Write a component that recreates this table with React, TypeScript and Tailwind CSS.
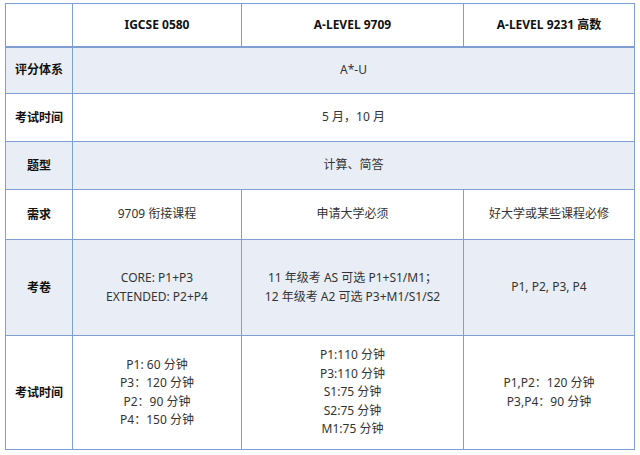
export default function App() {
  const font = { fontFamily: '"Noto Sans", "Noto Sans CJK SC", sans-serif' };
  const b = "border border-[#7f9fd2]";
  const td = `${b} text-center align-middle text-[12px] text-[#333] leading-[18.5px]`;
  const th = `${b} text-center align-middle text-[12px] font-bold text-[#111]`;
  const shade = "bg-[#e9eef6]";
  return (
    <div className="w-[640px] h-[455px] bg-white pt-[3px] pl-[5px]" style={font}>
      <table className="border-collapse table-fixed w-[629px]">
        <colgroup>
          <col className="w-[67px]" />
          <col className="w-[169px]" />
          <col className="w-[222px]" />
          <col className="w-[171px]" />
        </colgroup>
        <tbody>
          <tr className="h-[43px] border-b-2 border-b-[#7f9fd2]">
            <td className={th}></td>
            <td className={th}>IGCSE 0580</td>
            <td className={th}>A-LEVEL 9709</td>
            <td className={th}>A-LEVEL 9231 高数</td>
          </tr>
          <tr className={`h-[47px] ${shade}`}>
            <td className={th}>评分体系</td>
            <td className={td} colSpan={3}>A*-U</td>
          </tr>
          <tr className="h-[48px]">
            <td className={th}>考试时间</td>
            <td className={td} colSpan={3}>5 月，10 月</td>
          </tr>
          <tr className={`h-[48px] ${shade}`}>
            <td className={th}>题型</td>
            <td className={td} colSpan={3}>计算、简答</td>
          </tr>
          <tr className="h-[50px]">
            <td className={th}>需求</td>
            <td className={td}>9709 衔接课程</td>
            <td className={td}>申请大学必须</td>
            <td className={td}>好大学或某些课程必修</td>
          </tr>
          <tr className={`h-[96px] ${shade}`}>
            <td className={th}>考卷</td>
            <td className={td}>
              <div>CORE: P1+P3</div>
              <div>EXTENDED: P2+P4</div>
            </td>
            <td className={td}>
              <div>11 年级考 AS 可选 P1+S1/M1；</div>
              <div>12 年级考 A2 可选 P3+M1/S1/S2</div>
            </td>
            <td className={td}>P1, P2, P3, P4</td>
          </tr>
          <tr className="h-[114px]">
            <td className={th}>考试时间</td>
            <td className={td}>
              <div>P1: 60 分钟</div>
              <div>P3：120 分钟</div>
              <div>P2：90 分钟</div>
              <div>P4：150 分钟</div>
            </td>
            <td className={td}>
              <div>P1:110 分钟</div>
              <div>P3:110 分钟</div>
              <div>S1:75 分钟</div>
              <div>S2:75 分钟</div>
              <div>M1:75 分钟</div>
            </td>
            <td className={td}>
              <div>P1,P2：120 分钟</div>
              <div>P3,P4：90 分钟</div>
            </td>
          </tr>
        </tbody>
      </table>
    </div>
  );
}
